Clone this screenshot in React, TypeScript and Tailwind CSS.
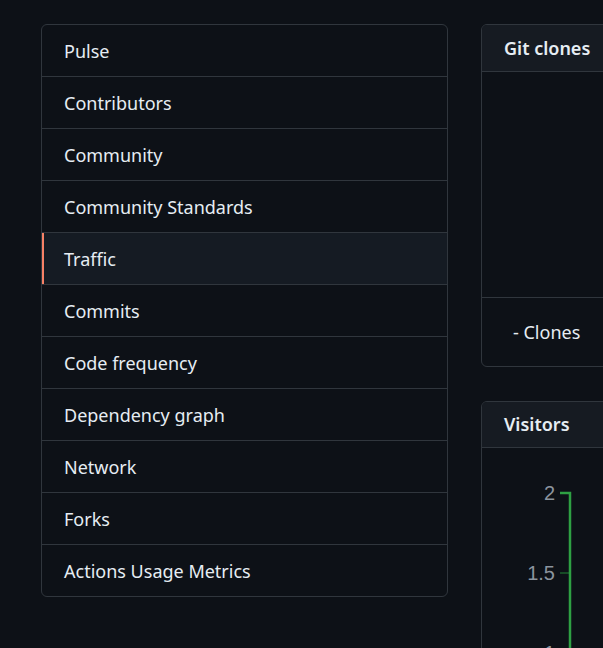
import React from 'react'

const ITEMS = [
  'Pulse',
  'Contributors',
  'Community',
  'Community Standards',
  'Traffic',
  'Commits',
  'Code frequency',
  'Dependency graph',
  'Network',
  'Forks',
  'Actions Usage Metrics',
]

function Box({ title, head, children }: { title: string; head: string; children: React.ReactNode }) {
  return (
    <div className="rounded-md border border-[#30363d] overflow-hidden">
      <div className={`${head} flex items-center px-[22px] bg-[#161b22] border-b border-[#30363d] font-semibold text-[18px] text-[#e6edf3]`}>
        {title}
      </div>
      {children}
    </div>
  )
}

export default function App() {
  return (
    <div className="w-[603px] h-[648px] overflow-hidden bg-[#0d1117] font-['Noto_Sans',sans-serif]">
      <div className="flex gap-[33px] pl-[41px] pt-[24px] w-[1100px]">
        {/* sidebar menu */}
        <nav className="w-[407px] shrink-0 self-start rounded-md border border-[#30363d] overflow-hidden">
          {ITEMS.map((label, i) => {
            const active = label === 'Traffic'
            return (
              <div
                key={label}
                className={`relative flex items-center pl-[22px] pt-[1px] text-[18px] text-[#e6edf3] ${i > 0 ? 'h-[52px] border-t border-[#30363d]' : 'h-[51px]'} ${active ? 'bg-[#151b23]' : ''}`}
              >
                {active && <span className="absolute left-0 top-0 bottom-0 w-[2px] bg-[#f78166]" />}
                {label}
              </div>
            )
          })}
        </nav>

        {/* graphs */}
        <div className="w-[560px] flex flex-col gap-[34px]">
          <Box title="Git clones" head="h-[47px]">
            <div className="h-[226px] border-b border-[#30363d]" />
            <div className="h-[68px] flex items-center pl-[31px] text-[18px] text-[#e6edf3]">- Clones</div>
          </Box>
          <Box title="Visitors" head="h-[46px]">
            <div className="h-[300px] relative">
              <svg width="200" height="300" className="absolute left-0 top-0">
                <g fontFamily="Liberation Sans, Arial, sans-serif" fontSize="20" fill="#8b949e" textAnchor="end">
                  <text x="73" y="52">2</text>
                  <text x="73" y="132">1.5</text>
                  <text x="73" y="212">1</text>
                </g>
                <line x1="78" y1="125" x2="88" y2="125" stroke="#238636" strokeWidth="1" />
                <line x1="78" y1="205" x2="88" y2="205" stroke="#238636" strokeWidth="1" />
                <path d="M78 45 H88 V300" fill="none" stroke="#2ea043" strokeWidth="2.5" />
              </svg>
            </div>
          </Box>
        </div>
      </div>
    </div>
  )
}
